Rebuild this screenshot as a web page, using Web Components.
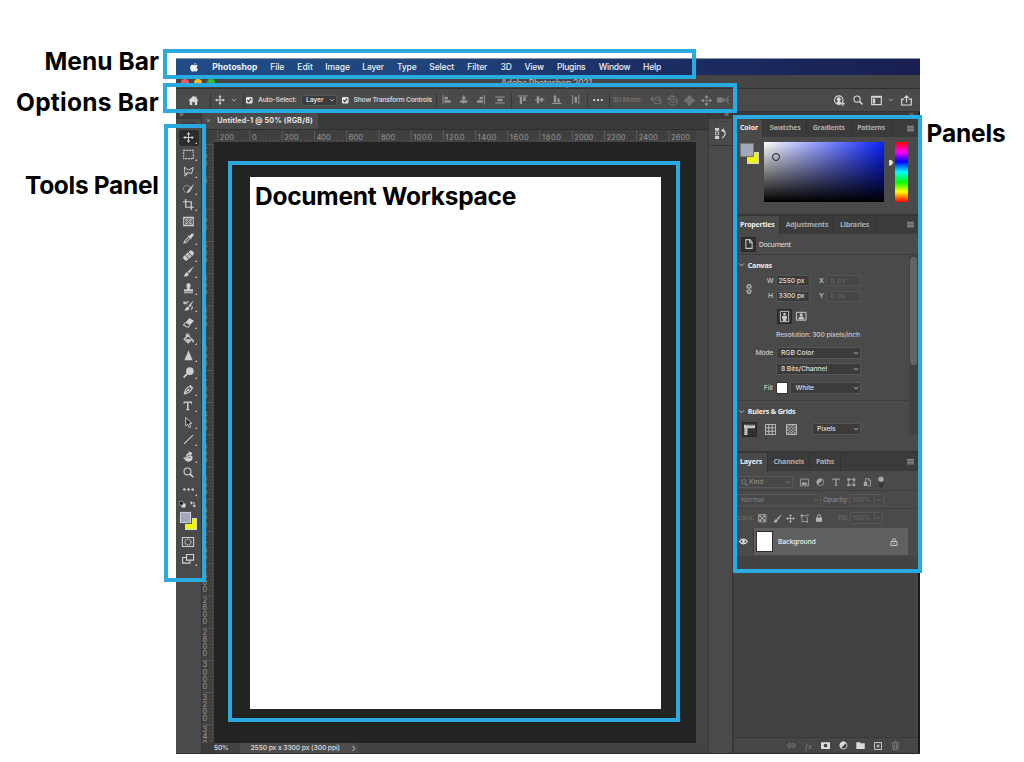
<!DOCTYPE html>
<html lang="en">
<head>
<meta charset="utf-8">
<title>Photoshop workspace overview</title>
<style>
  html, body { margin: 0; background: #fff; }
  body { display: flow-root; position: relative; width: 1024px; height: 762px; overflow: hidden; font-family: Inter, "Liberation Sans", sans-serif; }
</style>
</head>
<body>
<workspace-window></workspace-window>

<call-out x="163" y="48.5" w="533" h="30"></call-out>
<call-out x="163" y="83" w="574" h="30"></call-out>
<call-out x="164" y="124" w="41.5" h="457.5"></call-out>
<call-out x="228" y="160.6" w="452" h="561"></call-out>
<call-out x="733.4" y="115" w="188.3" h="458"></call-out>
<call-title x="44.5" y="61" w="114.5">Menu Bar</call-title>
<call-title x="16" y="102" w="143">Options Bar</call-title>
<call-title x="25" y="185" w="133.5">Tools Panel</call-title>
<call-title x="926.5" y="133" w="79">Panels</call-title>
<call-title x="255" y="195.5" w="261">Document Workspace</call-title>

<script>
// All icons live on a 16x16 grid and use currentColor.
const S = 'fill="none" stroke="currentColor"';
const ICONS = {
  apple: '<path d="M11 1c.1 1.500-1.200 3-2.700 3C8.100 2.600 9.500 1.100 11 1zM8.200 5c.7 0 1.600-.8 3-.8 1 0 2 .5 2.700 1.400-2.500 1.500-2 4.900.5 5.900-.6 1.600-2 3.900-3.400 3.900-1 0-1.400-.6-2.700-.6s-1.700.6-2.700.6C3.700 15.400 1.700 11.700 1.700 8.900c0-3 1.900-4.600 3.800-4.600 1.200 0 2 .7 2.700.7z"/>',
  home: '<path d="M8 1 .5 8h2v6.500h3.700V10h3.600v4.500h3.700V8h2L12.500 5.200V2h-1.700v1.600z"/>',
  move: `<path ${S} stroke-width="1.500" d="M8 3v10M3 8h10"/><path d="M8 0l2.600 3.600H5.400zM8 16l-2.600-3.600h5.200zM0 8l3.600-2.600v5.200zM16 8l-3.600 2.600V5.400z"/>`,
  chevron: `<path ${S} stroke-width="2" d="M2.500 5.500 8 11l5.500-5.500"/>`,
  chevRight: `<path ${S} stroke-width="2" d="M6 2l4.500 6L6 14"/>`,
  collapse: `<path ${S} stroke-width="2" d="M8 3 3 8l5 5M14 3 9 8l5 5"/>`,
  expand: `<path ${S} stroke-width="2" d="M2 3l5 5-5 5M8 3l5 5-5 5"/>`,
  check: '<rect width="16" height="16" rx="3" fill="#e6e6e6"/><path fill="none" stroke="#333" stroke-width="2.800" d="M3.500 8l3.200 3.500L12.500 4"/>',
  alLeft: '<path d="M1 0h1.500v16H1zM4 3h6v4.200H4zM4 9h10.500v4.200H4z"/>',
  alCenter: '<path d="M7.300 0h1.500v16H7.300zM5 3h6v4.200H5zM2 9h12v4.200H2z"/>',
  alRight: '<path d="M13.500 0H15v16h-1.500zM6 3h6v4.200H6zM1.500 9H12v4.200H1.500z"/>',
  distH: '<path d="M.5 2.500h15V4H.5zM4 6h8v4H4zM.5 12h15v1.500H.5z"/>',
  alTop: '<path d="M0 1h16v1.500H0zM3 3.500h4V15H3zM9 3.500h4v6.500H9z"/>',
  alMid: '<path d="M0 7.300h16v1.500H0zM3 2h4v12H3zM9 4.500h4v7H9z"/>',
  alBottom: '<path d="M0 13.500h16V15H0zM3 1h4v11.500H3zM9 6h4v6.500H9z"/>',
  distV: '<path d="M2 0h1.500v16H2zM6 3h4v10H6zM12.500 0H14v16h-1.500z"/>',
  dots: '<circle cx="2" cy="8" r="1.800"/><circle cx="8" cy="8" r="1.800"/><circle cx="14" cy="8" r="1.800"/>',
  orbit: `<path ${S} stroke-width="1.300" d="M5 9.500C-1 9-.5 5 4 5.500M2.500 3.500 5 5.700 2.800 8M7 8.500a3.500 3.500 0 1 1 5.500 1.500M4.500 10.500c2 3 9.500 3.500 10.500 1s-3-3.500-6.500-3.500"/>`,
  roll: `<circle cx="8" cy="8" r="2.800" ${S} stroke-width="1.400"/><path ${S} stroke-width="1.300" d="M1.500 3v3.500H5M2 6.500A6.500 6.500 0 1 1 2 10.500M4 2A7 7 0 0 1 9 1"/>`,
  pan: `<path fill-opacity=".45" stroke="currentColor" d="M6.700 6.700V4H5l3-3.500L11 4H9.300v2.700H12V5l3.500 3-3.500 3V9.300H9.300V12H11l-3 3.500L5 12h1.700V9.300H4V11L.5 8 4 5v1.700z"/>`,
  slide: '<circle cx="8" cy="8" r="1.500"/><path d="M8 0l3 3.500H9V5H7V3.500H5zM8 16l3-3.500H9V11H7v1.500H5zM0 8l3.500 3V9H5V7H3.500V5zM16 8l-3.500 3V9H11V7h1.500V5z"/>',
  camera: `<path d="M0 4.500h7.500v7H0zM7.500 7.500l3-2.500v6l-3-2.500z"/><path ${S} stroke-width="1.300" d="M15.500 3 12 8l3.500 5M13 8h3"/>`,
  user: `<circle cx="7" cy="7.500" r="6.200" ${S} stroke-width="1.600"/><circle cx="7" cy="6" r="2.900"/><path d="M5.500 7h3v2.500l2 1.200-1 2.800h-5l-1.500-2.300 2.500-1.700zM12 9.500h1.500V12H16v1.500h-2.500V16H12v-2.500H9.500V12H12z"/>`,
  search: `<circle cx="6.500" cy="6.500" r="5" ${S} stroke-width="1.700"/><path ${S} stroke-width="2.300" d="M10 10l5 5"/>`,
  screens: `<rect x="1" y="2" width="14" height="12" ${S} stroke-width="1.700"/><path d="M3 5h3v7.500H3zM2 3h12v1H2z"/>`,
  share: `<path ${S} stroke-width="1.700" d="M4.500 6H1v8.500h14V6h-3.500M8 11V1.500M4.800 4.500 8 1.300l3.200 3.200"/>`,
  marquee: `<path ${S} stroke-width="1.500" stroke-dasharray="2.600 1.300" d="M1 2h14v12H1z"/>`,
  lasso: `<path ${S} stroke-width="1.400" d="M2 1.500 8 6l7-4-2.500 9-5.500-1.500-4 3zM7 9.500 4.500 14M3 12.500c-2 1.500 0 3 1 1.500"/>`,
  quick: `<circle cx="5.500" cy="8.500" r="5" ${S} stroke-width="1.200" stroke-dasharray="2 1.200"/><path d="M16 1l-4.500 9.500L9 8.500zM8.500 8.800l2.300 2.200c-.5 2.500-2.800 3.500-5.300 3C7 13 6.500 10 8.500 8.800z"/>`,
  crop: `<path ${S} stroke-width="1.800" d="M4 0v12h12M0 4h12v12"/>`,
  frame: `<path ${S} stroke-width="1.500" d="M1 2h14v12H1z"/><path ${S} stroke-width="1.200" d="M1 2l14 12M15 2 1 14M4.500 4.500h7v7h-7z"/>`,
  dropper: `<path d="M15 1c-1.500-1-3 0-4 1.500L9.500 4l-1-.7-1.500 1.500 4.500 4.400 1.400-1.400-.7-1L14 5c1.500-1 2-3 1-4z"/><path ${S} stroke-width="1.500" d="M8 6 2.500 11.500 1.500 14.500l3-1L10 8"/>`,
  heal: '<g transform="rotate(-42 8 8)"><rect x="-.5" y="4" width="17" height="8" rx="3"/><path stroke="#484848" stroke-width="1.200" d="M5 4v8M11 4v8"/><path fill="#484848" d="M6.500 6h1v1h-1zM8.500 6h1v1h-1zM6.500 9h1v1h-1zM8.500 9h1v1h-1z"/></g>',
  brush: '<path d="M16 0 9.300 10.500 6.700 8.200zM6 9l2.500 2.500C8 15 4 15.500.5 15 3 13 3 9.500 6 9z"/>',
  stamp: '<path d="M6 7.500C3.500 3 5.500 .5 8 .5s4.500 2.500 2 7V9h4.500v3.200h-13V9H6zM1.500 13.300h13V15h-13z"/>',
  history: `<path d="M16 .5 10 10.500 7.500 8.500zM7 9.500l2.300 2C9 15 5 15.500 1.500 15c2.500-1 2.500-5 5.500-5.500z"/><path ${S} stroke-width="1.600" d="M9 3.500C6.500 1.500 4 3 2 5.500M1.500 1.500v4H6M12.500 9c2 1 1 4-1 5"/>`,
  eraser: `<path d="M9.500 1.500 16 5.500 10 12 3.500 8z"/><path ${S} stroke-width="1.500" d="M3.500 8 .8 11.500l4.700 3H8l2-2.500"/>`,
  bucket: `<path ${S} stroke-width="1.600" d="M6.500 3.500 1.500 9l6 5.500L13 9zM9.500 6.500C9 0 5 0 4.800 3v5"/><path d="M3 9h9l-4.500 4.500zM13 7.500c2.500 2 4 5 2 6.500C13 13 13.500 10 13 7.500z"/>`,
  sharpen: '<path d="M8 .5l6 14.500H2z"/>',
  dodge: `<circle cx="10" cy="6" r="5.500"/><path ${S} stroke-width="2.800" d="M6 10 1 15"/>`,
  pen: `<path ${S} stroke-width="1.500" d="M10 1.500l5 5M9.500 3.500C6 4.500 3 6 1.800 14.500 9 13.500 11.500 10.500 13 7zM2 14l5-5"/><circle cx="8" cy="8.500" r="1.700"/>`,
  type: '<path d="M1 1h14v4.200h-1.200C13.500 3.300 12.800 3 11 3H9.300v10c0 1 .5 1.300 2 1.400v1H4.700v-1c1.500-.1 2-.4 2-1.400V3H5c-1.800 0-2.500.3-2.800 2.200H1z"/>',
  select: '<path fill="#222" stroke="currentColor" stroke-width="1.400" d="M4 .5v12.500l2.800-2.600L9 15.500l2.200-1L9 9.700H13z"/>',
  line: `<path ${S} stroke-width="1.500" d="M1.500 14.500l13-13"/>`,
  hand: `<path d="M4 7.500C5 4 7 3.500 8.500 3L7.500 .5l6 2-2 4.500C14 7 14.500 9 13.500 12c-1 3.500-6 4.500-9 2.500L.5 10l1-1.500L4.500 11z"/><path fill="none" stroke="#484848" d="M5 8.500c1.500-2 3-2.500 5-2M6.500 10.500c2-1.500 3-1.500 4.500-1"/>`,
  swap: `<path ${S} stroke-width="2" d="M3 4.500h7.500v8"/><path d="M5 0v9L0 4.500zM5.500 11h10l-5 5z"/>`,
  defaults: '<path d="M6 6h10v10H6z" fill="#ddd"/><path d="M1 1h9v9H1z" fill="#111" stroke="#bbb" stroke-width="1.500"/>',
  mask: `<rect x=".5" y="2" width="15" height="12" ${S} stroke-width="1.400"/><circle cx="8" cy="8" r="4" ${S} stroke-width="1.400" stroke-dasharray="2 .8"/>`,
  modes: `<path ${S} stroke-width="1.500" d="M6 2h9.500v7.500H6zM5.500 6H.8v7.500h9.700V10"/>`,
  dock: `<path d="M0 0h6v4H0zM0 11.500h6V16H0z"/><path ${S} stroke-width="1.300" d="M.7 5.700h4.600v4.200H.7z"/><path ${S} stroke-width="1.900" d="M12 3c4 2.500 4 8-1.500 11.500"/><path d="M8.500 3.500 13 .5v6z"/>`,
  doc: `<path ${S} stroke-width="1.700" d="M3 1h6.500L13 5v10H3zM9 1.500V6h4"/>`,
  menu: `<path ${S} stroke-width="1.700" d="M0 3h16M0 6.500h16M0 10h16M0 13.500h16"/>`,
  link: `<path ${S} stroke-width="1.800" d="M5 7V4a3 3 0 0 1 6 0v3M5 9v3a3 3 0 0 0 6 0V9M8 4.500v7"/>`,
  linkH: `<path ${S} stroke-width="1.500" d="M7 5H4a3 3 0 0 0 0 6h3M9 5h3a3 3 0 0 1 0 6H9M5 8h6"/>`,
  portrait: `<path ${S} stroke-width="1.400" d="M2 .5h12v15H2z"/><circle cx="8" cy="4.500" r="2"/><path d="M4.500 7h7v4.500H10.500V15h-5v-3.500h-1z"/>`,
  landscape: `<path ${S} stroke-width="1.500" d="M.7 2h14.600v12H.7z"/><circle cx="8" cy="6" r="2.400"/><path d="M3.500 13c0-3 1.500-4.700 4.500-4.700s4.500 1.700 4.500 4.700z"/>`,
  rulers: '<path d="M0 1h16v5H5v10H0z"/><path stroke="#2c2c2c" d="M4.500 1v2M7.500 1v2M10.500 1v2M13.500 1v2M0 7.500h2M0 10.500h2M0 13.500h2"/>',
  grid: `<path ${S} stroke-width="1.300" d="M.7.700h14.600v14.600H.7zM5.500 1v14M10.500 1v14M1 5.500h14M1 10.500h14"/>`,
  checker: `<path ${S} stroke-width="1.300" d="M.7.700h14.600v14.600H.7z"/><path ${S} d="M1 6l5-5M1 11 11 1M2 15 15 2M6 15l9-9M11 15l4-4M10 1l5 5M5 1l10 10M1 2l13 13M1 6l9 9M1 11l4 4"/>`,
  image: `<path ${S} stroke-width="1.500" d="M.7 2h14.600v12H.7z"/><path d="M3 12V9l2.500-2.500 2.500 3L10 7l3 3v2z"/>`,
  adjust: `<circle cx="8" cy="8" r="6.300" ${S} stroke-width="1.500"/><path d="M12.700 3.300A6.600 6.600 0 1 0 3.300 12.700z"/>`,
  shape: `<path ${S} stroke-width="1.400" d="M3 3h10v10H3z"/><path d="M.5.500h4.500V5H.5zM11 .5h4.500V5H11zM.5 11h4.500v4.500H.5zM11 11h4.500v4.500H11z"/>`,
  smart: `<path ${S} stroke-width="1.600" d="M5 7V1h5.500l3.500 3v11H9"/><path d="M1.500 7H8v8H1.500zM10 1l4 4h-4z"/>`,
  toggle: '<rect x="4.500" y="5" width="7" height="12" rx="3.500" fill="#363636"/><circle cx="8" cy="3.500" r="4.300"/>',
  pixels: `<path ${S} stroke-width="1.400" d="M1 1h14v14H1z"/><path d="M2.500 2.500H6V6H2.500zM10 2.500h3.500V6H10zM6 6h4v4H6zM2.500 10H6v3.500H2.500zM10 10h3.500v3.500H10z"/>`,
  artboard: `<path ${S} stroke-width="1.400" d="M3.500 0v13.500H13M0 3h9.500L13 6.500V16M10.500 2H16"/>`,
  lock: `<path d="M2 7h12v8.500H2z"/><path ${S} stroke-width="2" d="M4.800 7V4.500a3.200 3.200 0 0 1 6.400 0V7"/>`,
  lockOpen: `<path ${S} stroke-width="1.700" d="M2 7h12v8H2zM4.800 7V4.500a3.200 3.200 0 0 1 6.400 0V7"/><path d="M7 9.500h2v3H7z"/>`,
  eye: `<path ${S} stroke-width="2" d="M1 8c3.500-5.500 10.500-5.500 14 0-3.500 5.500-10.500 5.500-14 0z"/><circle cx="8" cy="8" r="2.500"/>`,
  addMask: '<path fill-rule="evenodd" d="M0 2h16v12H0zM8 4.700a3.300 3.300 0 1 0 0 6.600 3.300 3.300 0 0 0 0-6.600z"/>',
  folder: '<path d="M.5 2H7l1.500 2h7v10H.5z"/>',
  plus: `<path ${S} stroke-width="1.700" d="M1 1h14v14H1zM8 4.500v7M4.500 8h7"/>`,
  trash: `<path ${S} stroke-width="1.500" d="M1.500 3.500h13M6 3V1.200h4V3M3 4l.7 11h8.600L13 4M6.300 6v7M9.700 6v7"/>`
};

class PsIcon extends HTMLElement {
  connectedCallback() {
    const size = this.getAttribute('size') || 12;
    this.attachShadow({ mode: 'open' }).innerHTML = `
      <style>
        :host { display: inline-block; flex: none; width: ${size}px; height: ${size}px; }
        svg { display: block; width: 100%; height: 100%; overflow: visible; }
      </style>
      <svg viewBox="0 0 16 16" fill="currentColor">${ICONS[this.getAttribute('name')] || ''}</svg>`;
  }
}

// Text with a set width: the letter spacing takes up the difference.
class UiLabel extends HTMLElement {
  connectedCallback() {
    const w = parseFloat(this.getAttribute('w'));
    const root = this.attachShadow({ mode: 'open' });
    root.innerHTML = `
      <style>:host { display: inline-block; flex: none; width: ${w}px; white-space: nowrap; } span { display: inline-block; }</style>
      <span><slot></slot></span>`;
    if (!this.textContent) return;
    const span = root.querySelector('span');
    const free = w - span.getBoundingClientRect().width;
    span.style.letterSpacing = (free / this.textContent.length).toFixed(3) + 'px';
  }
}

// Lays items out left to right; each item is [x, width, markup], x in window coordinates.
function row(start, items) {
  let end = start;
  return items.map(([x, w, html]) => {
    const gap = (x - end).toFixed(2);
    end = x + w;
    return `<span class="cell" style="margin-left:${gap}px;width:${w}px">${html}</span>`;
  }).join('');
}
const ROW_CSS = `
  * { box-sizing: border-box; }
  .row { display: flex; align-items: center; }
  .cell { display: flex; flex: none; align-items: center; }`;
const icon = (cx, name, size = 12, color = '') =>
  [cx - size / 2, size, `<ps-icon name="${name}" size="${size}" ${color ? `style="color:${color}"` : ''}></ps-icon>`];
const label = (x, w, text, cls = '') => [x, w, `<ui-label w="${w}" class="${cls}">${text}</ui-label>`];
const field = (x, w, h, tw, text, attrs = '') => [x, w, `<ui-field w="${w}" h="${h}" tw="${tw}" ${attrs}>${text}</ui-field>`];

class UiField extends HTMLElement {
  connectedCallback() {
    const a = (n, d) => this.getAttribute(n) || d;
    const text = this.textContent;
    this.attachShadow({ mode: 'open' }).innerHTML = `
      <style>
        :host { display: flex; align-items: center; box-sizing: border-box; flex: none;
          width: ${a('w')}px; height: ${a('h')}px; padding: 0 1px 0 ${a('pad', '3')}px;
          background: ${a('bg', '#3b3b3b')}; border: 1px solid ${a('line', '#555')}; border-radius: 1px; color: ${a('ink', '#dedede')}; }
        .arrow { margin-left: auto; }
        ps-icon { display: block; }
      </style>
      ${this.hasAttribute('find') ? '<ps-icon name="search" size="7" style="margin-right:1px"></ps-icon>' : ''}
      ${text ? `<ui-label w="${a('tw')}">${text}</ui-label>` : ''}
      ${this.hasAttribute('arrow') ? '<ps-icon class="arrow" name="chevron" size="6"></ps-icon>' : ''}`;
  }
}

class MenuBar extends HTMLElement {
  connectedCallback() {
    const items = [['File', 270.3, 14], ['Edit', 297.3, 15.5], ['Image', 325.3, 24.5], ['Layer', 362.3, 21.5], ['Type', 397, 19.5],
      ['Select', 429.3, 24.7], ['Filter', 467.3, 20], ['3D', 500.5, 11.5], ['View', 524.5, 19.5], ['Plugins', 557, 28.5],
      ['Window', 598.8, 31.5], ['Help', 643, 18.3]];
    this.attachShadow({ mode: 'open' }).innerHTML = `
      <style>${ROW_CSS}
        :host { display: block; height: 17px; border-top: 1px solid #8c93ad; box-sizing: border-box; color: #eef2f8;
          background: linear-gradient(90deg, #204c86, #1f467d 30%, #1b2f66 62%, #191f50); font: 500 8.5px/14px Inter, sans-serif; }
        .row { height: 15px; }
        .b { font-weight: 700; }
      </style>
      <div class="row">${row(176, [icon(193.5, 'apple', 10), label(212.3, 45, 'Photoshop', 'b'), ...items.map(([t, x, w]) => label(x, w, t))])}</div>`;
  }
}

class TitleBar extends HTMLElement {
  connectedCallback() {
    this.attachShadow({ mode: 'open' }).innerHTML = `
      <style>${ROW_CSS}
        :host { display: block; height: 14px; background: #454545; border-bottom: 1px solid #303030; box-sizing: border-box; color: #b5b5b5; font: 500 8.5px/10px Inter, sans-serif; }
        .row { height: 15px; }
        i { width: 8px; height: 8px; border-radius: 50%; }
      </style>
      <div class="row">${row(176, [[181, 8, '<i style="background:#fc5753"></i>'], [194, 8, '<i style="background:#fdb624"></i>'],
        [207, 8, '<i style="background:#2ac131"></i>'], label(501, 91, 'Adobe Photoshop 2021')])}</div>`;
  }
}

class OptionsBar extends HTMLElement {
  connectedCallback() {
    const sep = x => [x, 1, '<i></i>'];
    const grey = '#969696', dim = '#7c7c7c', lit = '#dadada';
    this.attachShadow({ mode: 'open' }).innerHTML = `
      <style>${ROW_CSS}
        :host { display: block; height: 23px; background: #4a4a4a; border-bottom: 1px solid #333; box-sizing: border-box; color: #d0d0d0; font: 600 6.8px/10px Inter, sans-serif; }
        .row { height: 22px; }
        i { width: 1px; height: 15px; background: #383838; }
        .dim { color: #777; font-weight: 500; }
      </style>
      <div class="row">${row(176, [
        icon(193.5, 'home', 11, lit), sep(210), icon(220, 'move', 10, lit), icon(233.7, 'chevron', 6), sep(243),
        icon(249.5, 'check', 6.5), label(258, 38.5, 'Auto-Select:'), field(301, 36, 11, 17.5, 'Layer', 'arrow pad="4"'),
        icon(345, 'check', 6.5), label(353.5, 78.5, 'Show Transform Controls'), sep(436),
        icon(447, 'alLeft', 9.5, grey), icon(464, 'alCenter', 9.5, grey), icon(481, 'alRight', 9.5, grey), icon(500.5, 'distH', 10, grey), sep(511),
        icon(522.5, 'alTop', 9.5, grey), icon(539.3, 'alMid', 9.5, grey), icon(556.3, 'alBottom', 9.5, grey), icon(575.8, 'distV', 9.5, grey), sep(587),
        icon(598, 'dots', 10, '#ddd'), sep(609), label(612.5, 30, '3D Mode:', 'dim'),
        icon(656, 'orbit', 12, dim), icon(672.5, 'roll', 11, dim), icon(689.5, 'pan', 11, '#8a8a8a'), icon(706.5, 'slide', 11, grey), icon(723, 'camera', 12, dim),
        icon(840, 'user', 11, lit), icon(858, 'search', 10, lit), icon(877, 'screens', 11, lit), icon(891, 'chevron', 5.5, lit), icon(906.3, 'share', 11, lit)
      ])}</div>`;
  }
}

class ToolStrip extends HTMLElement {
  connectedCallback() {
    const tools = ['move', 'marquee', 'lasso', 'quick', 'crop', 'frame', 'dropper', 'heal', 'brush', 'stamp', 'history', 'eraser',
      'bucket', 'sharpen', 'dodge', 'pen', 'type', 'select', 'line', 'hand', 'search', 'dots'];
    const plain = ['frame', 'search'];
    this.attachShadow({ mode: 'open' }).innerHTML = `
      <style>
        * { box-sizing: border-box; }
        :host { display: flex; flex-direction: column; align-items: center; flex: none; box-sizing: border-box; width: 26px; background: #4a4a4a; border-right: 1px solid #353535; color: #cfcfcf; }
        .head { align-self: stretch; height: 7px; background: #3a3a3a; padding: 0 0 0 3px; }
        .head ps-icon { display: block; }
        .grip { height: 2px; width: 12px; margin: 3px 0 5.5px; border-top: 1px dotted #333; border-bottom: 1px dotted #333; }
        .tool { position: relative; display: flex; flex: none; align-items: center; justify-content: center; width: 20px; height: 16.75px; }
        .tool ps-icon { margin-left: -1px; }
        .tool.on { background: #2c2c2c; border-radius: 2px; }
        .more::after { content: ""; position: absolute; right: 2px; bottom: 2px; border: 1px solid #ccc; border-top-color: transparent; border-left-color: transparent; }
        .mini { display: flex; gap: 5px; height: 13px; align-items: center; margin-left: -2px; }
        .colors { position: relative; width: 18px; height: 19px; margin: 0 1px 5px 0; }
        .colors i { position: absolute; border: 1px solid #d8d8d8; width: 12px; height: 12px; right: 0; bottom: 0; background: #eff600; }
        .colors i:last-child { left: 0; top: 0; width: 13px; height: 13px; background: #a3a7bd; border-color: #555; box-shadow: inset 0 0 0 1px #c8cad4; }
      </style>
      <div class="head"><ps-icon name="expand" size="5"></ps-icon></div>
      <div class="grip"></div>
      ${tools.map((t, i) => `<div class="tool ${i ? '' : 'on'} ${plain.includes(t) ? '' : 'more'}"><ps-icon name="${t}" size="${t === 'type' ? 9.5 : 11}"></ps-icon></div>`).join('')}
      <div class="mini"><ps-icon name="defaults" size="6.5"></ps-icon><ps-icon name="swap" size="6.5"></ps-icon></div>
      <div class="colors"><i></i><i></i></div>
      <div class="tool" style="margin-top:-1px"><ps-icon name="mask" size="12"></ps-icon></div>
      <div class="tool more"><ps-icon name="modes" size="12"></ps-icon></div>`;
  }
}

// Ruler in document pixels; zero sits at the paper's edge.
class DocRuler extends HTMLElement {
  connectedCallback() {
    const vertical = this.hasAttribute('vertical');
    const length = parseFloat(this.getAttribute('length'));
    const zero = parseFloat(this.getAttribute('zero'));
    const scale = 410.9 / 2550;
    let out = '';
    for (let v = -220; v * scale + zero < length; v += 20) {
      const p = v * scale + zero;
      if (p < 0) continue;
      const major = v % 200 === 0;
      const len = major ? 12 : v % 100 === 0 ? 4 : 2.5;
      out += vertical
        ? `<path d="M${12 - len} ${p}h${len}" ${major ? 'class="m"' : ''}/>`
        : `<path d="M${p} ${12 - len}v${len}" ${major ? 'class="m"' : ''}/>`;
      if (!major) continue;
      const text = String(Math.abs(v));
      if (vertical) {
        [...text].forEach((c, i) => {
          const y = p + 7 + i * 7.1;
          if (y - 5 < length) out += `<text x="0.4" y="${y}">${c}</text>`;
        });
      } else if (p < length - 14) out += `<text x="${p + 2}" y="9.7" textLength="${text.length * 4.75}">${text}</text>`;
    }
    const w = vertical ? 12 : length, h = vertical ? length : 12;
    this.attachShadow({ mode: 'open' }).innerHTML = `
      <style>
        :host { display: block; flex: none; background: #3f3f3f; }
        svg { display: block; }
        path { stroke: #585858; stroke-width: .8; }
        .m { stroke: #636363; }
        text { font: 400 7.5px Inter, sans-serif; fill: #9a9a9a; }
      </style>
      <svg width="${w}" height="${h}">${out}</svg>`;
  }
}

class DocumentView extends HTMLElement {
  connectedCallback() {
    this.attachShadow({ mode: 'open' }).innerHTML = `
      <style>${ROW_CSS}
        :host { display: flex; flex-direction: column; flex: none; width: 506px; background: #444; }
        .tabs { display: flex; height: 18px; background: #3a3a3a; border-bottom: 1px solid #2e2e2e; }
        .tab { width: 116px; height: 17px; background: #4a4a4a; color: #e6e6e6; font: 700 7.2px/16px Inter, sans-serif; }
        .x { font-weight: 400; color: #aaa; }
        .rule { display: flex; height: 12px; padding-left: 12px; background: linear-gradient(90deg, #3f3f3f 494px, #444 494px); }
        .view { display: flex; height: 601px; }
        .canvas { width: 482px; padding: 35px 0 0 36px; background: #232323; }
        .paper { width: 411px; height: 531.5px; background: #fff; }
        .status { height: 10px; color: #dcdcdc; font: 500 6.8px/10px Inter, sans-serif; background: linear-gradient(90deg, #3a3a3a 12px, #434343 12px, #434343 38px, #4d4d4d 38px, #4d4d4d 156px, #434343 156px); }
      </style>
      <div class="tabs"><div class="tab row">${row(202, [label(206, 5, '×', 'x'), label(217.3, 95.5, 'Untitled-1 @ 50% (RGB/8)')])}</div></div>
      <div class="rule"><doc-ruler length="482" zero="36"></doc-ruler></div>
      <div class="view"><doc-ruler vertical length="601" zero="35"></doc-ruler><div class="canvas"><div class="paper"></div></div></div>
      <div class="status row">${row(202, [label(214, 14.5, '50%'), label(250.5, 89.5, '2550 px x 3300 px (300 ppi)'), icon(353.5, 'chevRight', 7)])}</div>`;
  }
}

class SideDock extends HTMLElement {
  connectedCallback() {
    this.attachShadow({ mode: 'open' }).innerHTML = `
      <style>
        :host { display: flex; flex-direction: column; flex: none; box-sizing: border-box; width: 26px; background: #4a4a4a; color: #d2d2d2; border: solid #363636; border-width: 0 2px 0 1px; }
        .head { height: 7px; background: #3a3a3a; display: flex; justify-content: flex-end; padding-right: 3px; }
        .box { height: 27px; border-bottom: 1px solid #363636; display: flex; flex-direction: column; align-items: center; gap: 4px; padding-top: 1px; box-sizing: border-box; }
        .grip { width: 12px; height: 2px; border-top: 1px dotted #333; margin-top: 1px; }
      </style>
      <div class="head"><ps-icon name="collapse" size="5"></ps-icon></div>
      <div class="box"><div class="grip"></div><ps-icon name="dock" size="11"></ps-icon></div>`;
  }
}

// Tab strip; tabs come as "text:x:width:right edge", separated by "|".
class PanelTabs extends HTMLElement {
  connectedCallback() {
    let start = 734;
    const tabs = this.getAttribute('tabs').split('|').map((t, i) => {
      const [text, x, w, end] = t.split(':');
      const html = `<div class="tab ${i ? '' : 'on'}" style="width:${end - start}px;padding-left:${x - start}px"><ui-label w="${w}">${text}</ui-label></div>`;
      start = +end;
      return html;
    }).join('');
    this.attachShadow({ mode: 'open' }).innerHTML = `
      <style>
        :host { display: flex; align-items: center; flex: none; height: 18px; background: #3b3b3b; color: #adadad; box-sizing: border-box; padding-right: 3.5px; font: 700 7px/17px "Open Sans", sans-serif; }
        .tab { box-sizing: border-box; flex: none; height: 18px; border-right: 1px solid #313131; }
        .on { background: #4a4a4a; color: #f0f0f0; }
        ps-icon { margin-left: auto; }
      </style>${tabs}<ps-icon name="menu" size="7"></ps-icon>`;
  }
}

class ColorPanel extends HTMLElement {
  connectedCallback() {
    this.attachShadow({ mode: 'open' }).innerHTML = `
      <style>
        * { box-sizing: border-box; }
        :host { display: flex; box-sizing: border-box; height: 77px; padding: 4.5px 0 0 6px; }
        .chips { position: relative; width: 20px; height: 22px; margin-top: 1px; }
        .chips i { position: absolute; right: 1px; bottom: 1px; width: 12px; height: 12px; background: #eff600; border: 1px solid #d5d5d5; }
        .chips i:last-child { left: 0; top: 0; width: 14px; height: 14px; background: #a3a7bd; border-color: #777; box-shadow: inset 0 0 0 1px #aaa; }
        .field { position: relative; margin-left: 3.5px; width: 120.5px; height: 60.5px; background: linear-gradient(transparent, #000), linear-gradient(90deg, #fff, #0a22ff); }
        .ring { position: absolute; left: 8.5px; top: 11px; width: 8px; height: 8px; border: 1.2px solid #222; border-radius: 50%; }
        .hue { width: 12.5px; height: 60.5px; background: linear-gradient(#f00, #f0f 17%, #00f 33%, #0ff 50%, #0f0 67%, #ff0 83%, #f00); }
        .pin { width: 5px; height: 6px; margin: 18px 1.5px 0 4.5px; background: #ddd; clip-path: polygon(0 0, 50% 0, 100% 50%, 50% 100%, 0 100%); }
      </style>
      <div class="chips"><i></i><i></i></div>
      <div class="field"><div class="ring"></div></div>
      <div class="pin"></div><div class="hue"></div>`;
  }
}

class PropertiesPanel extends HTMLElement {
  connectedCallback() {
    const off = 'bg="#464646" line="#555" ink="#636363"';
    this.attachShadow({ mode: 'open' }).innerHTML = `
      <style>${ROW_CSS}
        :host { display: block; height: 217.5px; color: #c6c6c6; font: 500 6.8px/10px Inter, sans-serif; }
        .doc { height: 21.5px; padding-top: 1px; border-bottom: 1px solid #3b3b3b; font: 600 7.2px/10px "Open Sans", sans-serif; }
        .body { display: flex; height: 180px; }
        .main { width: 174.5px; }
        .track { width: 9px; background: #424242; padding: 2px 1px; }
        .thumb { height: 108px; border-radius: 4px; background: #646464; }
        .b { font: 700 7.2px/10px "Open Sans", sans-serif; color: #eee; }
        .rule { height: 1px; background: #3d3d3d; }
        .btn { display: flex; width: 15px; height: 15px; align-items: center; justify-content: center; background: #303030; border: 1px solid #292929; }
        .size { display: flex; align-items: center; padding-left: 10px; }
        .fill { width: 12px; height: 12px; background: #fff; border: 1px solid #333; }
      </style>
      <div class="doc row">${row(734, [[741, 15, '<span class="btn"><ps-icon name="doc" size="10"></ps-icon></span>'], label(758.7, 32, 'Document')])}</div>
      <div class="body">
        <div class="main">
          <div class="row" style="height:19px">${row(734, [icon(741.5, 'chevron', 7), label(747.8, 24, 'Canvas', 'b')])}</div>
          <div class="size">
            <ps-icon name="link" size="10"></ps-icon>
            <div>
              <div class="row" style="height:15.3px;margin-top:-1px">${row(754, [label(766.8, 6.5, 'W'), field(776, 34, 11, 26, '2550 px', 'pad="1.5"'), label(819, 5, 'X'), field(826, 35, 11, 16, '0 px', off)])}</div>
              <div class="row" style="height:15.5px">${row(754, [label(768, 5.5, 'H'), field(776, 34, 11, 26, '3300 px', 'pad="1.5"'), label(819, 5, 'Y'), field(826, 35, 11, 16, '0 px', off)])}</div>
            </div>
          </div>
          <div class="row" style="height:25px">${row(734, [[776.5, 16, '<span class="btn"><ps-icon name="portrait" size="11"></ps-icon></span>'], icon(801.3, 'landscape', 10.5)])}</div>
          <div class="row" style="height:13px">${row(734, [label(776, 84, 'Resolution: 300 pixels/inch')])}</div>
          <div class="row" style="height:21.5px">${row(734, [label(755.5, 17.5, 'Mode'), field(776, 85, 12, 33, 'RGB Color', 'arrow pad="4"')])}</div>
          <div class="row" style="height:12px">${row(734, [field(776, 85, 12, 46, '8 Bits/Channel', 'arrow pad="4"')])}</div>
          <div class="row" style="height:25px">${row(734, [label(763.8, 9, 'Fill'), [776, 12, '<span class="fill"></span>'], field(790.5, 70.5, 12, 18.5, 'White', 'arrow pad="4"')])}</div>
          <div class="rule"></div>
          <div class="row" style="height:20px">${row(734, [icon(741.5, 'chevron', 7), label(747.8, 47.5, 'Rulers &amp; Grids', 'b')])}</div>
          <div class="row" style="height:15.5px">${row(734, [[741.5, 16, '<span class="btn"><ps-icon name="rulers" size="11"></ps-icon></span>'], icon(770.5, 'grid', 11), icon(791.5, 'checker', 11), field(812, 49, 12, 18.5, 'Pixels', 'arrow pad="4"')])}</div>
        </div>
        <div class="track"><div class="thumb"></div></div>
      </div>`;
  }
}

class LayersPanel extends HTMLElement {
  connectedCallback() {
    const off = 'bg="#474747" line="#585858"';
    const g = '#a5a5a5', d = '#b5b5b5';
    this.attachShadow({ mode: 'open' }).innerHTML = `
      <style>${ROW_CSS}
        :host { display: block; flex: 1; font: 500 6.8px/10px Inter, sans-serif; color: #828282; }
        .tools { height: 19px; border-bottom: 1px solid #3f3f3f; }
        .layers { display: flex; height: 27px; }
        .eye { width: 20px; display: flex; justify-content: flex-end; align-items: center; padding-right: 5px; border-right: 1px solid #3a3a3a; color: #e8e8e8; }
        .layer { width: 154px; background: #606060; color: #ececec; height: 27px; }
        .thumb { width: 17px; height: 20.5px; background: #fff; border: 1px solid #2e2e2e; }
        .dim { color: #686868; }
      </style>
      <div class="tools row" style="height:20px;padding-top:4px">${row(734, [field(737, 56, 12, 14.5, 'Kind', `find arrow ${off} ink="#8a8a8a"`), icon(804.7, 'image', 9, g), icon(820, 'adjust', 8.5, g), icon(835.7, 'type', 8, g), icon(851.3, 'shape', 8.5, g), icon(867, 'smart', 8.5, g), icon(881, 'toggle', 10, g)])}</div>
      <div class="tools row" style="height:18px;padding-top:2px">${row(734, [field(737, 83.5, 12, 23, 'Normal', `arrow ${off} ink="#777"`), label(823, 26, 'Opacity:'), field(850, 25, 12, 18, '100%', `pad="1.5" ${off} ink="#666"`), field(874, 9.5, 12, 0, '', `arrow pad="0.1" ${off} ink="#777"`)])}</div>
      <div class="row" style="height:19.5px">${row(734, [label(737.5, 17, 'Lock:', 'dim'), icon(762, 'pixels', 8.5, d), icon(777, 'brush', 9, d), icon(790, 'move', 9, d), icon(804.3, 'artboard', 9, d), icon(818.7, 'lock', 8, d), label(838, 10, 'Fill:', 'dim'), field(850, 25, 12, 18, '100%', `pad="1.5" ${off} ink="#666"`), field(874, 9.5, 12, 0, '', `arrow pad="0.1" ${off} ink="#777"`)])}</div>
      <div class="layers"><div class="eye"><ps-icon name="eye" size="9"></ps-icon></div>
        <div class="layer row">${row(754, [[756, 17, '<span class="thumb"></span>'], label(778, 37.5, 'Background'), icon(893.5, 'lockOpen', 8, '#d5d5d5')])}</div></div>`;
  }
}

class PanelColumn extends HTMLElement {
  connectedCallback() {
    const lit = '#dcdcdc', dim = '#858585';
    this.attachShadow({ mode: 'open' }).innerHTML = `
      <style>${ROW_CSS}
        :host { display: flex; flex-direction: column; flex: 1; box-sizing: border-box; background: #4a4a4a; color: #aaa; border-right: 2px solid #1c1c1c; }
        .head { height: 7px; background: #3a3a3a; display: flex; justify-content: flex-end; padding-right: 4px; }
        .gap { height: 1.5px; background: #363636; flex: none; }
        layers-panel { background: linear-gradient(#4a4a4a 85px, #434343 85px); }
        .foot { height: 16px; border-top: 1px solid #383838; background: #464646; font: italic 9px/10px "Liberation Serif", serif; color: #858585; }
      </style>
      <div class="head"><ps-icon name="expand" size="5"></ps-icon></div>
      <panel-tabs tabs="Color:740:18:762.5|Swatches:769.5:31:807|Gradients:812.7:32:851.5|Patterns:857.3:27.5:892"></panel-tabs>
      <color-panel></color-panel>
      <div class="gap"></div>
      <panel-tabs tabs="Properties:740:34.5:780|Adjustments:785.7:42.5:833.5|Libraries:840:29:875.5"></panel-tabs>
      <properties-panel></properties-panel>
      <div class="gap"></div>
      <panel-tabs tabs="Layers:740:22:768|Channels:773.5:30.5:810|Paths:816:18:840.5"></panel-tabs>
      <layers-panel></layers-panel>
      <div class="foot row">${row(734, [icon(791.3, 'linkH', 9, dim), label(805, 7.5, 'fx'), icon(826, 'addMask', 9, lit), icon(843.7, 'adjust', 9, lit), icon(860.8, 'folder', 9, lit), icon(878, 'plus', 8, lit), icon(896, 'trash', 9, dim)])}</div>`;
  }
}

class WorkspaceWindow extends HTMLElement {
  connectedCallback() {
    this.attachShadow({ mode: 'open' }).innerHTML = `
      <style>
        :host { display: flex; flex-direction: column; box-sizing: border-box; width: 743.5px; height: 696px; margin: 58px 0 0 176px; background: #4a4a4a; border-bottom: 1px solid #2b2b2b; }
        .work { display: flex; flex: 1; min-height: 0; }
      </style>
      <menu-bar></menu-bar><title-bar></title-bar><options-bar></options-bar>
      <div class="work"><tool-strip></tool-strip><document-view></document-view><side-dock></side-dock><panel-column></panel-column></div>`;
  }
}

// Blue outline laid over a region of the window.
class CallOut extends HTMLElement {
  connectedCallback() {
    const a = n => this.getAttribute(n);
    this.attachShadow({ mode: 'open' }).innerHTML = `
      <style>:host { position: absolute; box-sizing: border-box; left: ${a('x')}px; top: ${a('y')}px; width: ${a('w')}px; height: ${a('h')}px; border: 4px solid #29abe2; }</style>`;
  }
}

class CallTitle extends HTMLElement {
  connectedCallback() {
    const a = n => this.getAttribute(n);
    this.attachShadow({ mode: 'open' }).innerHTML = `
      <style>:host { position: absolute; left: ${a('x')}px; top: ${a('y') - 15}px; font: 700 24.5px/30px Inter, sans-serif; color: #000; }</style>
      <ui-label w="${a('w')}">${this.textContent}</ui-label>`;
  }
}

customElements.define('workspace-window', WorkspaceWindow);
customElements.define('menu-bar', MenuBar);
customElements.define('title-bar', TitleBar);
customElements.define('options-bar', OptionsBar);
customElements.define('tool-strip', ToolStrip);
customElements.define('document-view', DocumentView);
customElements.define('doc-ruler', DocRuler);
customElements.define('side-dock', SideDock);
customElements.define('panel-column', PanelColumn);
customElements.define('panel-tabs', PanelTabs);
customElements.define('color-panel', ColorPanel);
customElements.define('properties-panel', PropertiesPanel);
customElements.define('layers-panel', LayersPanel);
customElements.define('ui-field', UiField);
customElements.define('call-out', CallOut);
customElements.define('call-title', CallTitle);
customElements.define('ps-icon', PsIcon);
// last, so that every label is measured in its final place
customElements.define('ui-label', UiLabel);
</script>
</body>
</html>
